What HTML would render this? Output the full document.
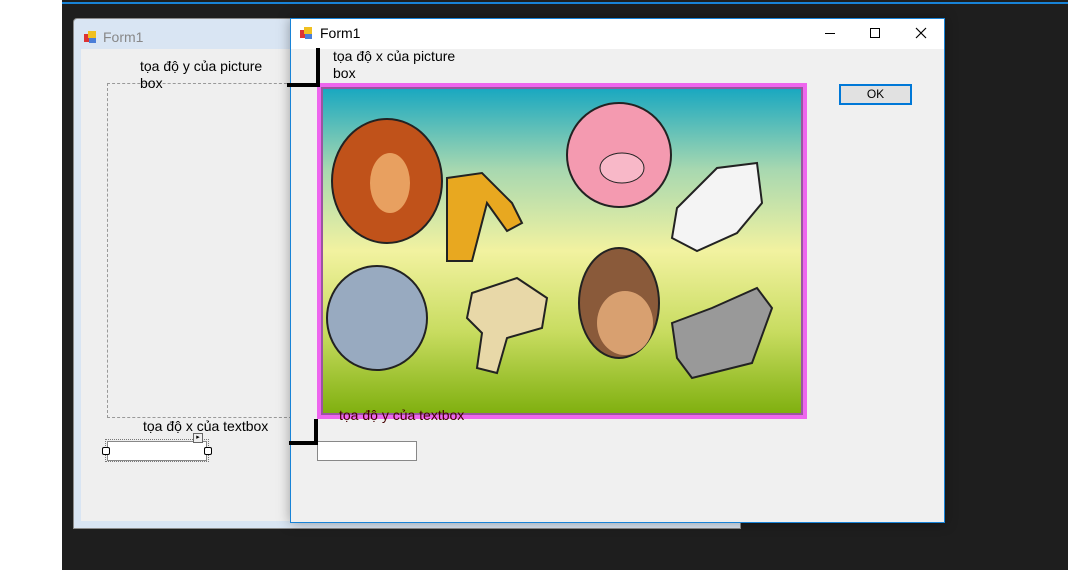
<!DOCTYPE html>
<html><head><meta charset="utf-8"><style>
body{margin:0;width:1068px;height:570px;overflow:hidden;background:#fff;position:relative;font-family:"Segoe UI","Liberation Sans","DejaVu Sans",sans-serif;}
.a{position:absolute}
.t{font-size:14px;color:#000;line-height:17px}
</style></head><body>
<div class="a" style="left:62px;top:0;width:1006px;height:570px;background:#1e1e1e"></div>
<div class="a" style="left:62px;top:2px;width:1006px;height:2px;background:#1883d7"></div>
<!-- designer form -->
<div class="a" style="left:73px;top:18px;width:668px;height:511px;background:#d9e5f3;border:1px solid #8a8a8a;border-radius:4px 4px 0 0;box-sizing:border-box"></div>
<div class="a" style="left:84px;top:31px;width:12px;height:12px"><div class="a" style="left:0;top:3px;width:5px;height:8px;background:#d33"></div><div class="a" style="left:4px;top:0;width:8px;height:7px;background:#f0c020"></div><div class="a" style="left:5px;top:7px;width:7px;height:5px;background:#4a7ed8"></div></div>
<div class="a t" style="left:103px;top:29px;color:#888">Form1</div>
<div class="a" style="left:81px;top:49px;width:660px;height:472px;background:#efefef"></div>
<div class="a" style="left:107px;top:83px;width:185px;height:335px;border:1px dashed #999;box-sizing:border-box"></div>
<div class="a t" style="left:140px;top:58px">tọa độ y của picture<br>box</div>
<div class="a t" style="left:143px;top:418px">tọa độ x của textbox</div>
<div class="a" style="left:105px;top:439px;width:104px;height:23px;border:1px dotted #777;box-sizing:border-box"></div>
<div class="a" style="left:107px;top:441px;width:100px;height:20px;background:#fff;border:1px solid #888;box-sizing:border-box"></div>
<div class="a" style="left:102px;top:447px;width:6px;height:6px;background:#fff;border:1px solid #000;border-radius:2px"></div>
<div class="a" style="left:204px;top:447px;width:6px;height:6px;background:#fff;border:1px solid #000;border-radius:2px"></div>
<div class="a" style="left:193px;top:433px;width:8px;height:8px;background:#eee;border:1px solid #666;font-size:7px;line-height:8px;text-align:center">▸</div>
<!-- runtime form -->
<div class="a" style="left:290px;top:18px;width:655px;height:505px;background:#f0f0f0;border:1px solid #1883d7;box-sizing:border-box;box-shadow:0 0 12px rgba(0,0,0,.35)"></div>
<div class="a" style="left:291px;top:19px;width:653px;height:30px;background:#fff"></div>
<div class="a" style="left:300px;top:27px;width:12px;height:12px"><div class="a" style="left:0;top:3px;width:5px;height:8px;background:#d33"></div><div class="a" style="left:4px;top:0;width:8px;height:7px;background:#f0c020"></div><div class="a" style="left:5px;top:7px;width:7px;height:5px;background:#4a7ed8"></div></div>
<div class="a t" style="left:320px;top:25px">Form1</div>
<div class="a" style="left:825px;top:33px;width:10px;height:1px;background:#000"></div>
<div class="a" style="left:870px;top:28px;width:10px;height:10px;border:1px solid #000;box-sizing:border-box"></div>
<svg class="a" style="left:915px;top:27px" width="12" height="12"><path d="M1 1L11 11M11 1L1 11" stroke="#000" stroke-width="1.2"/></svg>
<div class="a t" style="left:333px;top:48px">tọa độ x của picture<br>box</div>
<div class="a" style="left:839px;top:84px;width:73px;height:21px;background:#e1e1e1;border:2px solid #0078d7;box-sizing:border-box;font-size:12px;text-align:center;line-height:17px">OK</div>
<!-- picture -->
<svg class="a" style="left:317px;top:83px" width="490" height="336">
<defs><linearGradient id="g" x1="0" y1="0" x2="0" y2="1"><stop offset="0" stop-color="#1aa8c0"/><stop offset=".25" stop-color="#a8d8b0"/><stop offset=".5" stop-color="#f2f2a0"/><stop offset=".75" stop-color="#c8dc60"/><stop offset="1" stop-color="#80b010"/></linearGradient></defs>
<rect x="0" y="0" width="490" height="336" fill="#ee66ee"/>
<rect x="4" y="4" width="482" height="328" fill="#9a55a0"/>
<rect x="6" y="6" width="478" height="324" fill="url(#g)"/>
<ellipse cx="70" cy="98" rx="55" ry="62" fill="#c0521a" stroke="#222" stroke-width="2"/>
<ellipse cx="73" cy="100" rx="20" ry="30" fill="#e8a060"/>
<path d="M130 95L165 90 195 120 205 140 190 148 170 120 155 178 130 178Z" fill="#e8a820" stroke="#222" stroke-width="2"/>
<ellipse cx="302" cy="72" rx="52" ry="52" fill="#f49ab0" stroke="#222" stroke-width="2"/>
<ellipse cx="305" cy="85" rx="22" ry="15" fill="#f8b8c8" stroke="#222"/>
<path d="M360 125L400 85 440 80 445 120 420 150 380 168 355 155Z" fill="#f4f4f4" stroke="#222" stroke-width="2"/>
<ellipse cx="60" cy="235" rx="50" ry="52" fill="#98aac0" stroke="#222" stroke-width="2"/>
<path d="M155 210L200 195 230 215 225 245 190 255 180 290 160 285 165 250 150 235Z" fill="#e8d8a8" stroke="#222" stroke-width="2"/>
<ellipse cx="302" cy="220" rx="40" ry="55" fill="#8a5a3a" stroke="#222" stroke-width="2"/>
<ellipse cx="308" cy="240" rx="28" ry="32" fill="#d8a070"/>
<path d="M355 240L395 225 440 205 455 225 435 280 375 295 360 275Z" fill="#999" stroke="#222" stroke-width="2"/>
</svg>
<div class="a t" style="left:339px;top:407px;color:#400">tọa độ y của textbox</div>
<div class="a" style="left:317px;top:441px;width:100px;height:20px;background:#fff;border:1px solid #888;box-sizing:border-box"></div>
<!-- black markers -->
<div class="a" style="left:316px;top:48px;width:4px;height:39px;background:#000"></div>
<div class="a" style="left:287px;top:83px;width:33px;height:4px;background:#000"></div>
<div class="a" style="left:314px;top:419px;width:4px;height:25px;background:#000"></div>
<div class="a" style="left:289px;top:441px;width:29px;height:4px;background:#000"></div>
</body></html>
